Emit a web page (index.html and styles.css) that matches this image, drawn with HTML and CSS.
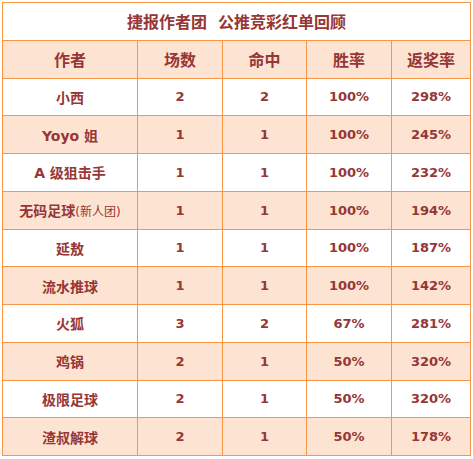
FILE: index.html
```html
<!DOCTYPE html>
<html>
<head>
<meta charset="utf-8">
<link rel="stylesheet" href="styles.css">
</head>
<body>
<table class="report">
  <colgroup>
    <col class="c1"><col class="c2"><col class="c3"><col class="c4"><col class="c5">
  </colgroup>
  <tr class="title"><td colspan="5">捷报作者团&nbsp;&nbsp;公推竞彩红单回顾</td></tr>
  <tr class="head"><td>作者</td><td>场数</td><td>命中</td><td>胜率</td><td>返奖率</td></tr>
  <tr class="w"><td class="name">小西</td><td>2</td><td>2</td><td>100%</td><td>298%</td></tr>
  <tr class="o"><td class="name">Yoyo 姐</td><td>1</td><td>1</td><td>100%</td><td>245%</td></tr>
  <tr class="w"><td class="name">A 级狙击手</td><td>1</td><td>1</td><td>100%</td><td>232%</td></tr>
  <tr class="o"><td class="name">无码足球<span class="small">(新人团)</span></td><td>1</td><td>1</td><td>100%</td><td>194%</td></tr>
  <tr class="w"><td class="name">延敖</td><td>1</td><td>1</td><td>100%</td><td>187%</td></tr>
  <tr class="o"><td class="name">流水推球</td><td>1</td><td>1</td><td>100%</td><td>142%</td></tr>
  <tr class="w"><td class="name">火狐</td><td>3</td><td>2</td><td>67%</td><td>281%</td></tr>
  <tr class="o"><td class="name">鸡锅</td><td>2</td><td>1</td><td>50%</td><td>320%</td></tr>
  <tr class="w"><td class="name">极限足球</td><td>2</td><td>1</td><td>50%</td><td>320%</td></tr>
  <tr class="o"><td class="name">渣叔解球</td><td>2</td><td>1</td><td>50%</td><td>178%</td></tr>
</table>
</body>
</html>
```
FILE: styles.css
```css
html, body {
  margin: 0;
  padding: 0;
  background: #ffffff;
}
body {
  padding: 2px 0 0 2px;
}
.report {
  border-collapse: collapse;
  table-layout: fixed;
  width: 468px;
  font-family: "DejaVu Sans", "Noto Sans CJK SC", sans-serif;
  color: #963636;
  font-weight: bold;
}
.c1 { width: 135px; }
.c2 { width: 85px; }
.c3 { width: 84px; }
.c4 { width: 85px; }
.c5 { width: 79px; }
.report td {
  border: 1px solid #f79646;
  text-align: center;
  vertical-align: middle;
  padding: 0;
  height: 36.75px;
  font-size: 13px;
  white-space: nowrap;
}
.report td.name {
  font-size: 14px;
}
.title td {
  background: #ffffff;
  font-size: 16px;
}
.head td {
  background: #fde4d2;
  font-size: 16px;
}
.w td { background: #ffffff; }
.o td { background: #fde4d2; }
.small {
  font-size: 12px;
  font-weight: normal;
}
```
